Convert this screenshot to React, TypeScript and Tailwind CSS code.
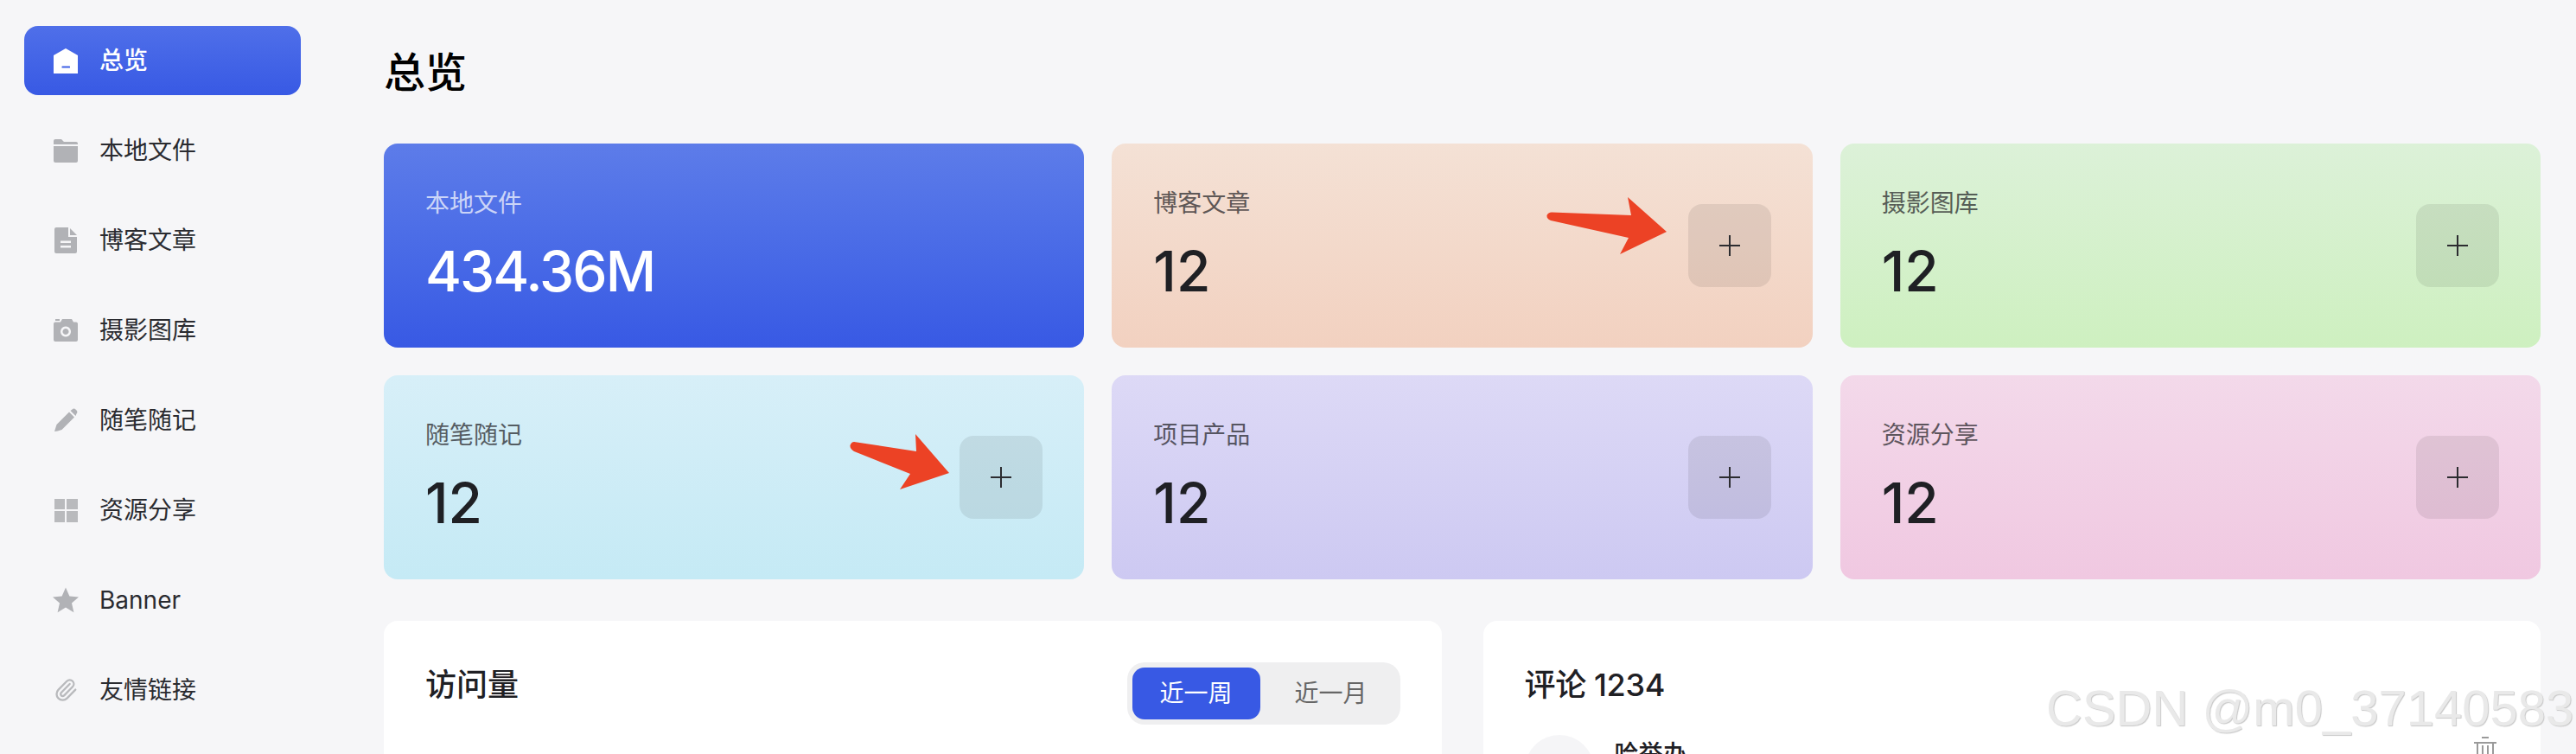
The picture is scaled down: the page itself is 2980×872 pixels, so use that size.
import { Paperclip } from 'lucide-react';
import type { ReactNode } from 'react';

function HomeIcon() {
  return (
    <svg width="28" height="30" viewBox="0 0 28 30" className="text-white">
      <path d="M14 1 L28 9 V30 H0 V9 Z" fill="currentColor" />
      <rect x="9.5" y="21.5" width="9.5" height="2" rx="0.5" fill="#3f60e6" />
    </svg>
  );
}

function FolderIcon() {
  return (
    <svg width="30" height="28" viewBox="0 0 30 28">
      <path d="M1 3 a2 2 0 0 1 2-2 h7 l3 3 h14 a2 2 0 0 1 2 2 v1 H1 Z" fill="#b1b2b6" />
      <path d="M1 9 H29 V26 a2 2 0 0 1-2 2 H3 a2 2 0 0 1-2-2 Z" fill="#b1b2b6" />
    </svg>
  );
}

function DocIcon() {
  return (
    <svg width="28" height="30" viewBox="0 0 28 30">
      <path d="M3 0 H17 V11 H27 V28 a2 2 0 0 1-2 2 H3 a2 2 0 0 1-2-2 V2 a2 2 0 0 1 2-2 Z" fill="#b1b2b6" />
      <path d="M19 1 L27 9 H19 Z" fill="#b1b2b6" />
      <rect x="8" y="15.5" width="12" height="2.5" fill="#f6f6f8" />
      <rect x="8" y="21" width="12" height="2.5" fill="#f6f6f8" />
    </svg>
  );
}

function CameraIcon() {
  return (
    <svg width="30" height="26" viewBox="0 0 30 26">
      <rect x="3" y="0" width="5" height="2" fill="#b1b2b6" />
      <path
        fillRule="evenodd"
        d="M3 3.5 H9 L11 0 H22 L24 3.5 H27 a2 2 0 0 1 2 2 V24 a2 2 0 0 1-2 2 H3 a2 2 0 0 1-2-2 V5.5 a2 2 0 0 1 2-2 Z M15 8.5 a6 6 0 1 0 0.01 0 Z M15 11 a3.5 3.5 0 1 1-0.01 0 Z"
        fill="#b1b2b6"
      />
    </svg>
  );
}

function PencilIcon() {
  return (
    <svg width="28" height="28" viewBox="0 0 28 28">
      <path d="M1 27 L3.5 19 L18 4.5 L24 10.5 L9.5 25 Q4 27 1 27 Z" fill="#b1b2b6" />
      <path d="M19.5 3 L21.5 1.5 a3 3 0 0 1 4 0 L26.5 2.5 a3 3 0 0 1 0 4 L25.5 9 Z" fill="#b1b2b6" />
    </svg>
  );
}

function GridIcon() {
  return (
    <div className="grid h-[27px] w-[27px] grid-cols-2 gap-[2px]">
      <span className="bg-[#b9babd]" />
      <span className="bg-[#b9babd]" />
      <span className="bg-[#b9babd]" />
      <span className="bg-[#b9babd]" />
    </div>
  );
}

function StarIcon() {
  return (
    <svg width="30" height="30" viewBox="0 0 30 30">
      <path
        d="M15 0.5 L19.4 10.4 L30 11.4 L22 18.6 L24.4 29.2 L15 23.6 L5.6 29.2 L8 18.6 L0 11.4 L10.6 10.4 Z"
        fill="#b1b2b6"
      />
    </svg>
  );
}

function PlusIcon() {
  return (
    <svg width="26" height="26" viewBox="0 0 26 26" className="text-[#2c2c30]">
      <path d="M13 1 V25 M1 13 H25" stroke="currentColor" strokeWidth="2" />
    </svg>
  );
}

function TrashIcon() {
  return (
    <svg width="28" height="28" viewBox="0 0 28 28" className="text-[#9a9a9a]">
      <path d="M10 1 H18 M1 7 H27" stroke="currentColor" strokeWidth="2" />
      <path d="M5 7 V28 M11 10 V28 M17 10 V28 M23 7 V28" stroke="currentColor" strokeWidth="2" />
    </svg>
  );
}

const navItems: { label: string; icon: ReactNode; active?: boolean }[] = [
  { label: '总览', icon: <HomeIcon />, active: true },
  { label: '本地文件', icon: <FolderIcon /> },
  { label: '博客文章', icon: <DocIcon /> },
  { label: '摄影图库', icon: <CameraIcon /> },
  { label: '随笔随记', icon: <PencilIcon /> },
  { label: '资源分享', icon: <GridIcon /> },
  { label: 'Banner', icon: <StarIcon /> },
  { label: '友情链接', icon: <Paperclip size={28} strokeWidth={2} className="text-[#b9babd]" /> },
];

function StatCard({
  label,
  value,
  className,
  valueClassName = '',
  children,
}: {
  label: string;
  value: string;
  className: string;
  valueClassName?: string;
  children?: ReactNode;
}) {
  return (
    <div className={`relative flex h-[236px] justify-between rounded-[16px] bg-gradient-to-b px-[48px] pt-[49px] ${className}`}>
      <div>
        <div className="text-[28px] leading-[40px] opacity-70">{label}</div>
        <div className={`mt-[23px] text-[64px] leading-[72px] font-medium ${valueClassName}`}>{value}</div>
      </div>
      {children}
    </div>
  );
}

function AddButton() {
  return (
    <button className="mt-[21px] flex h-[96px] w-[96px] items-center justify-center rounded-[16px] bg-black/[0.08]">
      <PlusIcon />
    </button>
  );
}

export default function App() {
  return (
    <div className="relative flex h-[872px] w-[2980px] overflow-hidden bg-[#f6f6f8] font-['Inter','Noto_Sans_CJK_SC',sans-serif] text-[#1f2024]">
      {/* Sidebar */}
      <aside className="flex w-[444px] shrink-0 flex-col gap-[24px] pt-[30px] pl-[28px]">
        {navItems.map((item) => (
          <div
            key={item.label}
            className={`flex h-[80px] w-[320px] shrink-0 items-center rounded-[16px] ${
              item.active ? 'bg-gradient-to-b from-[#4f6fe9] to-[#3859e4] font-medium text-white' : 'text-[#2a2b30]'
            }`}
          >
            <span className="flex w-[87px] shrink-0 items-center justify-center pl-[9px]">{item.icon}</span>
            <span className="text-[28px] leading-[40px]">{item.label}</span>
          </div>
        ))}
      </aside>

      {/* Main */}
      <main className="min-w-0 flex-1 pt-[56px] pr-[41px]">
        <h1 className="mb-[54px] text-[48px] leading-[56px] font-medium text-black">总览</h1>

        <div className="grid grid-cols-3 gap-[32px]">
          <StatCard
            label="本地文件"
            value="434.36M"
            className="from-[#5d7ce9] to-[#3859e4] text-white"
            valueClassName="tracking-[-0.03em]"
          />
          <StatCard label="博客文章" value="12" className="from-[#f4e1d5] to-[#f2d1c0]">
            <AddButton />
            <svg width="140" height="66" viewBox="0 0 140 66" className="absolute top-[62px] left-[503px]">
              <path
                d="M6 17.5 L98 21 L94 0 L139 40 L85 66 L95 47 L5 27 Q0 25 0.5 21 Q2 17.5 6 17.5 Z"
                fill="#ec4225"
              />
            </svg>
          </StatCard>
          <StatCard label="摄影图库" value="12" className="from-[#dcf1d8] to-[#cef0c0]">
            <AddButton />
          </StatCard>
          <StatCard label="随笔随记" value="12" className="from-[#d7eff8] to-[#c5eaf5]">
            <AddButton />
            <svg width="116" height="64" viewBox="0 0 116 64" className="absolute top-[68px] left-[539px]">
              <path
                d="M5 9 L77 20 L76 0 L115 45 L58 64 L70 46 L5 20 Q0 17 0.5 13 Q2 9 5 9 Z"
                fill="#ec4225"
              />
            </svg>
          </StatCard>
          <StatCard label="项目产品" value="12" className="from-[#ddd9f6] to-[#cdc9f2]">
            <AddButton />
          </StatCard>
          <StatCard label="资源分享" value="12" className="from-[#f3d9ea] to-[#f0c8e1]">
            <AddButton />
          </StatCard>
        </div>

        <div className="mt-[48px] grid grid-cols-2 gap-[48px]">
          <section className="h-[300px] rounded-[16px] bg-white p-[48px]">
            <div className="flex items-start justify-between">
              <h2 className="mt-[4px] text-[36px] leading-[44px] font-medium">访问量</h2>
              <div className="flex h-[72px] w-[316px] items-center rounded-[20px] bg-[#efeff0] px-[6px] text-[28px]">
                <button className="h-[60px] w-[148px] rounded-[14px] bg-[#3859e4] text-white">近一周</button>
                <button className="flex-1 pl-[8px] text-[#666]">近一月</button>
              </div>
            </div>
          </section>

          <section className="h-[300px] rounded-[16px] bg-white p-[48px]">
            <h2 className="mt-[4px] text-[36px] leading-[44px] font-medium tracking-[-0.01em]">评论 1234</h2>
            <div className="mt-[36px] flex justify-between">
              <div className="flex gap-[24px]">
                <div className="h-[80px] w-[80px] rounded-full bg-[#f5f5f7]" />
                <div className="mt-[2px] text-[28px] leading-[40px] font-medium">哈举办</div>
              </div>
              <span className="mt-[2px] mr-[2px]">
                <TrashIcon />
              </span>
            </div>
          </section>
        </div>
      </main>

      {/* Watermark */}
      <div className="absolute top-[786px] left-[2367px] font-['Liberation_Sans',sans-serif] text-[58px] leading-[66px] whitespace-nowrap text-[#e9e9e9] [text-shadow:1px_1px_1px_#c8c8c8]">
        CSDN @m0_37140583
      </div>
    </div>
  );
}
